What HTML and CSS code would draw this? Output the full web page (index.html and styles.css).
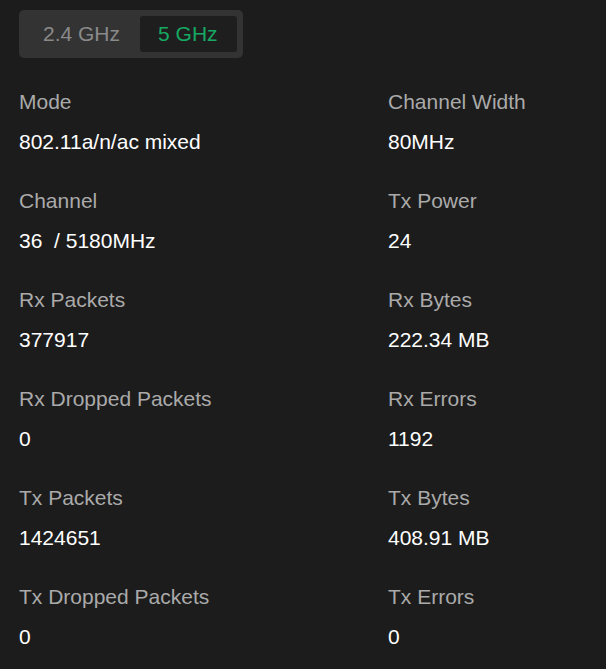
FILE: index.html
```html
<!DOCTYPE html>
<html>
<head>
<meta charset="utf-8">
<link rel="stylesheet" href="styles.css">
</head>
<body>
<div class="page">
  <div class="segment">
    <div class="tab">2.4 GHz</div>
    <div class="tab active">5 GHz</div>
  </div>
  <div class="grid">
    <div class="item"><div class="label">Mode</div><div class="value">802.11a/n/ac mixed</div></div>
    <div class="item"><div class="label">Channel Width</div><div class="value">80MHz</div></div>
    <div class="item"><div class="label">Channel</div><div class="value">36&nbsp; / 5180MHz</div></div>
    <div class="item"><div class="label">Tx Power</div><div class="value">24</div></div>
    <div class="item"><div class="label">Rx Packets</div><div class="value">377917</div></div>
    <div class="item"><div class="label">Rx Bytes</div><div class="value">222.34 MB</div></div>
    <div class="item"><div class="label">Rx Dropped Packets</div><div class="value">0</div></div>
    <div class="item"><div class="label">Rx Errors</div><div class="value">1192</div></div>
    <div class="item"><div class="label">Tx Packets</div><div class="value">1424651</div></div>
    <div class="item"><div class="label">Tx Bytes</div><div class="value">408.91 MB</div></div>
    <div class="item"><div class="label">Tx Dropped Packets</div><div class="value">0</div></div>
    <div class="item"><div class="label">Tx Errors</div><div class="value">0</div></div>
  </div>
</div>
</body>
</html>
```

FILE: styles.css
```css
html, body {
  margin: 0;
  padding: 0;
  background: #1c1c1c;
}
body {
  font-family: "Liberation Sans", Arial, sans-serif;
  font-size: 21px;
  color: #ffffff;
}
.page {
  padding: 10px 19px 0 19px;
}
.segment {
  display: inline-flex;
  background: #333333;
  border-radius: 5px;
  padding: 6px;
}
.tab {
  height: 36px;
  line-height: 36px;
  padding: 0 20px 0 18px;
  color: #8a8a8a;
  border-radius: 3px;
}
.tab.active {
  background: #1e1e1e;
  color: #17a864;
  padding: 0 19px 0 18px;
}
.grid {
  display: grid;
  grid-template-columns: 369px 1fr;
  row-gap: 35px;
  margin-top: 32px;
}
.item {
  display: flex;
  flex-direction: column;
  gap: 16px;
}
.label {
  line-height: 24px;
  color: #aaaaaa;
}
.value {
  line-height: 24px;
  color: #ffffff;
}
```
